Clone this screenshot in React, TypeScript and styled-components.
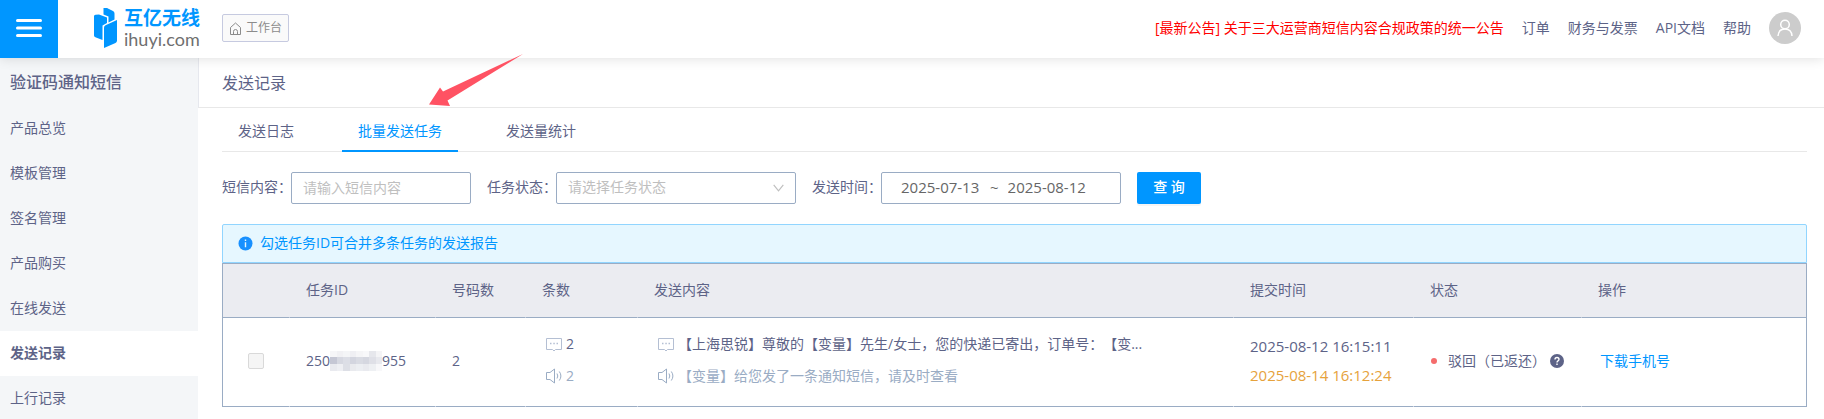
import React from 'react';
import styled, { createGlobalStyle } from 'styled-components';

const ink = '#5d6387';
const line = '#9aacc4';
const blue = '#0096ff';

const Global = createGlobalStyle`
  *, *::before, *::after { box-sizing: border-box; }
  body {
    margin: 0;
    background: #fff;
    color: ${ink};
    font: 14px/22px "Open Sans", "Noto Sans CJK SC", sans-serif;
    text-spacing-trim: space-all;
  }
  button, input, select { font: inherit; color: inherit; margin: 0; }
  a { color: inherit; text-decoration: none; }
  h1, h2, p { margin: 0; }
`;

const Shell = styled.div`
  display: flex;
  flex-direction: column;
  height: 100vh;
  overflow: hidden;
`;

const TopBar = styled.header`
  position: relative;
  z-index: 1;
  flex: none;
  display: flex;
  align-items: center;
  height: 58px;
  padding-bottom: 2px;
  background: #fff;
  box-shadow: 0 0 12px rgba(0, 0, 0, 0.14);
`;

const MenuButton = styled.button`
  display: flex;
  align-self: flex-start;
  align-items: center;
  justify-content: center;
  width: 58px;
  height: 58px;
  padding: 0 0 2px;
  border: 0;
  background: ${blue};
`;

const Brand = styled.a`
  display: flex;
  align-items: center;
  gap: 7px;
  margin-left: 36px;
`;

const BrandName = styled.span`
  display: flex;
  flex-direction: column;
  width: 79px;
  white-space: nowrap;
`;

const BrandTitle = styled.span`
  color: ${blue};
  font-size: 19px;
  font-weight: 700;
  line-height: 22px;
`;

const BrandDomain = styled.span`
  color: #6f6f6f;
  font: 400 18px/20px Lato, sans-serif;
`;

const DeskLink = styled.a`
  display: flex;
  align-items: center;
  gap: 4px;
  height: 28px;
  margin-left: 19px;
  padding: 0 6px;
  border: 1px solid #c6cae0;
  border-radius: 2px;
  background: #fafafa;
  color: #8c8c8c;
  font-size: 12px;
`;

const TopNav = styled.nav`
  display: flex;
  align-items: center;
  gap: 18px;
  margin-left: auto;
  padding-right: 23px;
`;

const Notice = styled.a`
  color: #f00;
`;

const Avatar = styled.button`
  display: flex;
  align-items: center;
  justify-content: center;
  width: 32px;
  height: 32px;
  padding: 0;
  border: 0;
  border-radius: 50%;
  background: #ccc;
`;

const Body = styled.div`
  flex: 1;
  min-height: 0;
  display: flex;
`;

const SideBar = styled.aside`
  flex: none;
  width: 198px;
  overflow: hidden;
  background: #f4f6f8;
`;

const SideTitle = styled.h2`
  padding-left: 10px;
  font-size: 16px;
  font-weight: 500;
  line-height: 48px;
`;

const SideLink = styled.a<{ $active?: boolean }>`
  display: block;
  padding: 0 0 2px 10px;
  line-height: 43px;
  background: ${(p) => (p.$active ? '#fff' : 'transparent')};
  font-weight: ${(p) => (p.$active ? 700 : 400)};
`;

const Main = styled.main`
  flex: 1;
  min-width: 0;
`;

const PageTitle = styled.h1`
  padding: 1px 0 0 23px;
  border-left: 1px solid #e6e8ee;
  border-bottom: 1px solid #e8e8e8;
  font-size: 16px;
  font-weight: 400;
  line-height: 48px;
`;

const Content = styled.div`
  padding: 0 17px 12px 24px;
`;

const Tabs = styled.div`
  display: flex;
  gap: 32px;
  height: 44px;
  border-bottom: 1px solid #e8e8e8;
`;

const Tab = styled.button<{ $active?: boolean }>`
  height: 44px;
  padding: 4px 16px 0;
  border: 0;
  border-bottom: 2px solid ${(p) => (p.$active ? blue : 'transparent')};
  background: none;
  color: ${(p) => (p.$active ? blue : ink)};
`;

const Filters = styled.form`
  display: flex;
  align-items: center;
  gap: 16px;
  padding: 20px 0;
`;

const Field = styled.label`
  display: flex;
  align-items: center;
`;

const FieldName = styled.span`
  width: 69px;
  padding-bottom: 2px;
  white-space: nowrap;
`;

const TextBox = styled.input`
  width: 180px;
  height: 32px;
  padding: 0 11px 2px;
  border: 1px solid ${line};
  border-radius: 2px;
  &::placeholder { color: #bfbfbf; opacity: 1; }
`;

const SelectWrap = styled.span`
  display: grid;
  align-items: center;
  width: 240px;
  > * { grid-area: 1 / 1; }
  svg { justify-self: end; margin-right: 12px; pointer-events: none; }
`;

const Select = styled.select`
  width: 100%;
  height: 32px;
  padding: 0 11px 2px;
  border: 1px solid ${line};
  border-radius: 2px;
  background: #fff;
  color: #bfbfbf;
  appearance: none;
`;

const DateRange = styled.span`
  display: flex;
  align-items: center;
  gap: 9px;
  width: 240px;
  height: 32px;
  padding: 0 19px 2px;
  border: 1px solid ${line};
  border-radius: 2px;
  color: #666;
  font-size: 15px;
`;

const DateBox = styled.input`
  width: 80px;
  padding: 0;
  border: 0;
  background: none;
  outline: 0;
`;

const Search = styled.button`
  width: 64px;
  height: 32px;
  padding: 0 0 2px;
  border: 0;
  border-radius: 2px;
  background: ${blue};
  box-shadow: 0 2px 0 rgba(0, 0, 0, 0.04);
  color: #fff;
  font-weight: 500;
`;

const Tip = styled.p`
  display: flex;
  align-items: center;
  gap: 7px;
  height: 39px;
  padding: 0 15px 1px;
  border: 1px solid #91d5ff;
  border-radius: 2px 2px 0 0;
  background: #e6f7ff;
  color: ${blue};
`;

const Table = styled.table`
  width: 100%;
  table-layout: fixed;
  border: 1px solid ${line};
  border-bottom: 0;
  border-spacing: 0;
`;

const Th = styled.th`
  height: 54px;
  padding: 0 16px 2px;
  border-right: 1px solid transparent;
  border-bottom: 1px solid ${line};
  background: #ebecf1;
  font-weight: 400;
  text-align: left;
  &:last-child { border-right: 0; }
`;

const Td = styled.td`
  height: 89px;
  padding: 0 16px 2px;
  border-right: 1px solid transparent;
  border-bottom: 1px solid ${line};
  white-space: nowrap;
  &:last-child { border-right: 0; }
`;

const CheckCell = styled.div`
  display: flex;
  justify-content: center;
`;

const Check = styled.input`
  width: 16px;
  height: 16px;
  border: 1px solid #d9d9d9;
  border-radius: 2px;
  background: #f5f5f5;
  appearance: none;
`;

const TaskId = styled.span`
  display: flex;
  align-items: center;
`;

const Lines = styled.div<{ $gap: number }>`
  display: flex;
  flex-direction: column;
  gap: ${(p) => p.$gap}px;
  padding-bottom: 2px;
`;

const Message = styled.span<{ $voice?: boolean }>`
  display: flex;
  align-items: center;
  gap: 4px;
  padding-left: 4px;
  color: ${(p) => (p.$voice ? line : ink)};
`;

const Time = styled.time<{ $late?: boolean }>`
  color: ${(p) => (p.$late ? '#e6a23c' : ink)};
  font-size: 15px;
`;

const Status = styled.span`
  display: flex;
  align-items: center;
`;

const Dot = styled.i`
  width: 6px;
  height: 6px;
  margin: 0 11px 0 1px;
  border-radius: 50%;
  background: #f56c6c;
`;

const HelpButton = styled.button`
  display: flex;
  margin-left: 4px;
  padding: 0;
  border: 0;
  background: none;
`;

const Download = styled.a`
  padding-left: 2px;
  color: ${blue};
`;

const Pointer = styled.svg`
  position: absolute;
  left: 428px;
  top: 53px;
  z-index: 2;
  pointer-events: none;
`;

const SmsIcon = () => (
  <svg width="16" height="16" viewBox="0 0 16 16" fill="none" stroke="#b4bfd3">
    <path d="M.5 2.5h15v11h-6l-1.5 1.5-1.5-1.5h-6z" />
    <path d="M4 7.5h1.5M7.3 7.5h1.5M10.5 7.5h1.5" strokeWidth="1.5" />
  </svg>
);

const VoiceIcon = () => (
  <svg width="16" height="16" viewBox="0 0 16 16" fill="none" stroke={line}>
    <path d="M8.5 1v14L4 11.5H.5v-7H4z" />
    <path d="M11 5.5q1.6 2.5 0 5M13.3 3.5q3.2 4.5 0 9" />
  </svg>
);

const sideLinks = ['产品总览', '模板管理', '签名管理', '产品购买', '在线发送', '发送记录', '上行记录'];
const topLinks = ['订单', '财务与发票', 'API文档', '帮助'];
const tabs = ['发送日志', '批量发送任务', '发送量统计'];
const mosaic = [
  '#f6f6f8', '#f1f1f4', '#f4f5f7', '#efeff3', '#f5f5f7', '#f8f8fa', '#e6e7ec', '#f4f4f6',
  '#c5c7d4', '#d6d8e1', '#dcdee6', '#d3d5df', '#d9dbe3', '#d5d7e0', '#dfe0e7', '#e8e9ee',
  '#e9eaef', '#eeeff3', '#dddfe6', '#e9eaee', '#eceef2', '#e9eaef', '#eef0f3', '#f8f8fa',
];

export default function App() {
  return (
    <Shell>
      <Global />
      <TopBar>
        <MenuButton aria-label="菜单">
          <svg width="26" height="20" viewBox="0 0 26 20" stroke="#fff" strokeWidth="3" strokeLinecap="round">
            <path d="M1.5 2.5h23M1.5 10h23M1.5 17.5h23" />
          </svg>
        </MenuButton>
        <Brand href="#" aria-label="互亿无线">
          <svg width="23" height="40" viewBox="0 0 23 40" fill={blue}>
            <path d="M9.5 0h3.5l6 3q1.5.8 1.5 2.5v6l-6 3V8.5l-5-2z" />
            <path d="M0 8q0-1 1.500-1.200L5 6.500l8 3v5.500L8.500 17.500V32L2 29.500Q0 29 0 27.500z" />
            <path d="M10 19.500q0-1.500 1.500-2.300L23 12v20.500q0 1.800-1.500 2.500L10 40z" />
          </svg>
          <BrandName>
            <BrandTitle>互亿无线</BrandTitle>
            <BrandDomain>ihuyi.com</BrandDomain>
          </BrandName>
        </Brand>
        <DeskLink href="#">
          <svg width="13" height="13" viewBox="0 0 13 13" fill="none" stroke="#8c8c8c">
            <path d="M1.5 5.5l5-4.5 5 4.5v7h-10zM4.5 12.5v-3q0-2 2-2t2 2v3" />
          </svg>
          工作台
        </DeskLink>
        <TopNav>
          <Notice href="#">[最新公告] 关于三大运营商短信内容合规政策的统一公告</Notice>
          {topLinks.map((t) => (
            <a key={t} href="#">{t}</a>
          ))}
          <Avatar aria-label="账户">
            <svg width="18" height="18" viewBox="0 0 18 18" fill="none" stroke="#fff" strokeWidth="1.5">
              <circle cx="9" cy="5.5" r="4.3" />
              <path d="M2 17q.5-7 7-7t7 7" />
            </svg>
          </Avatar>
        </TopNav>
        <Pointer width="96" height="54" viewBox="0 0 96 54" fill="#ff5263">
          <path d="M95 1L15 38.5 12 34.5 1 51.5 22 53 19.5 47.5z" />
        </Pointer>
      </TopBar>
      <Body>
        <SideBar>
          <SideTitle>验证码通知短信</SideTitle>
          {sideLinks.map((t) => (
            <SideLink key={t} href="#" $active={t === '发送记录'}>{t}</SideLink>
          ))}
        </SideBar>
        <Main>
          <PageTitle>发送记录</PageTitle>
          <Content>
            <Tabs role="tablist">
              {tabs.map((t, i) => (
                <Tab key={t} role="tab" aria-selected={i === 1} $active={i === 1}>{t}</Tab>
              ))}
            </Tabs>
            <Filters>
              <Field>
                <FieldName>短信内容：</FieldName>
                <TextBox placeholder="请输入短信内容" />
              </Field>
              <Field>
                <FieldName>任务状态：</FieldName>
                <SelectWrap>
                  <Select>
                    <option>请选择任务状态</option>
                  </Select>
                  <svg width="11" height="8" viewBox="0 0 11 8" fill="none" stroke="#bfbfbf" strokeWidth="1.2">
                    <path d="M.7 .8l4.8 6 4.8-6" />
                  </svg>
                </SelectWrap>
              </Field>
              <Field>
                <FieldName>发送时间：</FieldName>
                <DateRange>
                  <DateBox defaultValue="2025-07-13" aria-label="开始日期" />
                  ~
                  <DateBox defaultValue="2025-08-12" aria-label="结束日期" />
                </DateRange>
              </Field>
              <Search type="button">查 询</Search>
            </Filters>
            <Tip>
              <svg width="15" height="15" viewBox="0 0 15 15">
                <circle cx="7.5" cy="7.5" r="7" fill="#1890ff" />
                <path d="M7.5 3.5v1.6M7.5 6.3v5" stroke="#e6f7ff" strokeWidth="1.4" />
              </svg>
              勾选任务ID可合并多条任务的发送报告
            </Tip>
            <Table>
              <colgroup>
                <col width="67" />
                <col width="146" />
                <col width="90" />
                <col width="112" />
                <col />
                <col width="180" />
                <col width="168" />
                <col width="224" />
              </colgroup>
              <thead>
                <tr>
                  <Th />
                  <Th>任务ID</Th>
                  <Th>号码数</Th>
                  <Th>条数</Th>
                  <Th>发送内容</Th>
                  <Th>提交时间</Th>
                  <Th>状态</Th>
                  <Th>操作</Th>
                </tr>
              </thead>
              <tbody>
                <tr>
                  <Td>
                    <CheckCell>
                      <Check type="checkbox" disabled aria-label="选择任务" />
                    </CheckCell>
                  </Td>
                  <Td>
                    <TaskId>
                      250
                      <svg width="52" height="20" viewBox="0 0 52 20" shapeRendering="crispEdges">
                        {mosaic.map((c, i) => (
                          <rect key={i} x={(i % 8) * 6.5} y={[0, 6, 13][Math.floor(i / 8)]} width="6.5" height="7" fill={c} />
                        ))}
                      </svg>
                      955
                    </TaskId>
                  </Td>
                  <Td>2</Td>
                  <Td>
                    <Lines $gap={10}>
                      <Message><SmsIcon />2</Message>
                      <Message $voice><VoiceIcon />2</Message>
                    </Lines>
                  </Td>
                  <Td>
                    <Lines $gap={10}>
                      <Message><SmsIcon />【上海思锐】尊敬的【变量】先生/女士，您的快递已寄出，订单号：【变...</Message>
                      <Message $voice><VoiceIcon />【变量】给您发了一条通知短信，请及时查看</Message>
                    </Lines>
                  </Td>
                  <Td>
                    <Lines $gap={7}>
                      <Time>2025-08-12 16:15:11</Time>
                      <Time $late>2025-08-14 16:12:24</Time>
                    </Lines>
                  </Td>
                  <Td>
                    <Status>
                      <Dot />
                      驳回（已返还）
                      <HelpButton aria-label="说明">
                        <svg width="14" height="14" viewBox="0 0 14 14" fill="none">
                          <circle cx="7" cy="7" r="7" fill={ink} />
                          <path d="M5 5.5q0-2 2-2t2 1.8q0 1-1 1.5T7 8.5M7 9.6v1.4" stroke="#fff" strokeWidth="1.4" />
                        </svg>
                      </HelpButton>
                    </Status>
                  </Td>
                  <Td><Download href="#">下载手机号</Download></Td>
                </tr>
              </tbody>
            </Table>
          </Content>
        </Main>
      </Body>
    </Shell>
  );
}
